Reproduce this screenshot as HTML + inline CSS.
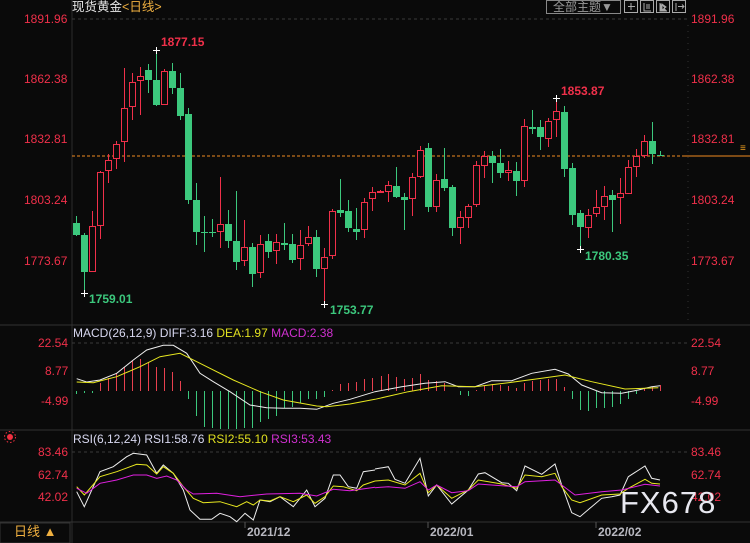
<!DOCTYPE html>
<html><head><meta charset="utf-8"><style>
html,body{margin:0;padding:0;background:#0a0a0a;}
body{width:750px;height:543px;overflow:hidden;position:relative;font-family:"Liberation Sans","Noto Sans CJK SC",sans-serif;}
svg{position:absolute;left:0;top:0;}
.t{position:absolute;white-space:nowrap;font-size:12px;line-height:14px;}
.r{color:#f0304a;}
</style></head><body>
<svg id="s" width="750" height="543" xmlns="http://www.w3.org/2000/svg">
<rect width="750" height="543" fill="#0a0a0a"/>
<line x1="72" y1="0" x2="72" y2="543" stroke="#2c2c2c"/>
<line x1="0" y1="325" x2="750" y2="325" stroke="#333"/>
<line x1="0" y1="430" x2="750" y2="430" stroke="#333"/>
<line x1="0" y1="522" x2="750" y2="522" stroke="#333"/>
<line x1="72" y1="19" x2="688" y2="19" stroke="#3a3a3a" stroke-dasharray="3,3"/>
<line x1="72" y1="343" x2="688" y2="343" stroke="#3a3a3a" stroke-dasharray="3,3"/>
<line x1="72" y1="452" x2="688" y2="452" stroke="#3a3a3a" stroke-dasharray="3,3"/>
<line x1="688" y1="25" x2="688" y2="325" stroke="#333" stroke-dasharray="1,5"/>
<line x1="72" y1="156" x2="683" y2="156" stroke="#f08a20" stroke-dasharray="3,2"/>
<line x1="683" y1="156" x2="750" y2="156" stroke="#f08a20"/>
<line x1="245" y1="522" x2="245" y2="528" stroke="#555"/>
<line x1="428" y1="522" x2="428" y2="528" stroke="#555"/>
<line x1="596" y1="522" x2="596" y2="528" stroke="#555"/>
<rect x="0" y="523" width="70" height="20" fill="#0a0a0a" stroke="#333"/>
<rect x="546.5" y="0.5" width="74" height="13" fill="none" stroke="#888"/>
<g fill="none" stroke="#aaa">
<rect x="624.5" y="0.5" width="13" height="12"/><rect x="640.5" y="0.5" width="13" height="12"/><rect x="656.5" y="0.5" width="13" height="12"/><rect x="672.5" y="0.5" width="13" height="12"/>
<path d="M631 3v7M628 6.5h7"/><path d="M644 3v8h7M647 4v5M649 4v5"/><path d="M660 3v8h7M662 4l4 3-4 3z" fill="#aaa"/><path d="M676 3v8M678 6.5h6M682 4.5l2 2-2 2"/>
</g>
<circle cx="10" cy="437" r="3" fill="#f03040"/><circle cx="10" cy="437" r="5.5" fill="none" stroke="#f03040" stroke-dasharray="1.5,2"/>
<g id="c"></g>
</svg>
<div class="t" style="left:72px;top:0px;font-size:12.5px;color:#e8e8e8">现货黄金<span style="color:#f0b040">&lt;日线&gt;</span></div>
<div class="t" style="left:553px;top:0px;color:#999">全部主题▼</div>
<div class="t r" style="left:24px;top:12px">1891.96</div>
<div class="t r" style="left:24px;top:72px">1862.38</div>
<div class="t r" style="left:24px;top:132px">1832.81</div>
<div class="t r" style="left:24px;top:193px">1803.24</div>
<div class="t r" style="left:24px;top:254px">1773.67</div>
<div class="t r" style="left:691px;top:12px">1891.96</div>
<div class="t r" style="left:691px;top:72px">1862.38</div>
<div class="t r" style="left:691px;top:132px">1832.81</div>
<div class="t r" style="left:691px;top:193px">1803.24</div>
<div class="t r" style="left:691px;top:254px">1773.67</div>
<div class="t" style="left:161px;top:35px;color:#f0304a;font-weight:bold">1877.15</div>
<div class="t" style="left:561px;top:84px;color:#f0304a;font-weight:bold">1853.87</div>
<div class="t" style="left:89px;top:292px;color:#3cc87d;font-weight:bold">1759.01</div>
<div class="t" style="left:330px;top:303px;color:#3cc87d;font-weight:bold">1753.77</div>
<div class="t" style="left:585px;top:249px;color:#3cc87d;font-weight:bold">1780.35</div>
<div class="t" style="left:740px;top:142px;color:#f0a020;font-size:10px">≡</div>
<div class="t" style="left:73px;top:326px;color:#d8d8f0">MACD(26,12,9) DIFF:3.16 <span style="color:#e0e020">DEA:1.97</span> <span style="color:#d030d0">MACD:2.38</span></div>
<div class="t r" style="left:38px;top:336px">22.54</div>
<div class="t r" style="left:45px;top:364px">8.77</div>
<div class="t r" style="left:41px;top:394px">-4.99</div>
<div class="t r" style="left:691px;top:336px">22.54</div>
<div class="t r" style="left:691px;top:364px">8.77</div>
<div class="t r" style="left:691px;top:394px">-4.99</div>
<div class="t" style="left:73px;top:432px;color:#d8d8f0">RSI(6,12,24) RSI1:58.76 <span style="color:#e0e020">RSI2:55.10</span> <span style="color:#d030d0">RSI3:53.43</span></div>
<div class="t r" style="left:38px;top:445px">83.46</div>
<div class="t r" style="left:38px;top:468px">62.74</div>
<div class="t r" style="left:38px;top:490px">42.02</div>
<div class="t r" style="left:691px;top:445px">83.46</div>
<div class="t r" style="left:691px;top:468px">62.74</div>
<div class="t r" style="left:691px;top:490px">42.02</div>
<div class="t" style="left:620px;top:486px;color:#e8e8f0;font-size:31px;line-height:34px;letter-spacing:1px">FX678</div>
<div class="t" style="left:14px;top:525px;color:#f0b040;font-size:13px">日线 ▲</div>
<div class="t" style="left:247px;top:525px;color:#b8b8c0;font-weight:bold">2021/12</div>
<div class="t" style="left:430px;top:525px;color:#b8b8c0;font-weight:bold">2022/01</div>
<div class="t" style="left:598px;top:525px;color:#b8b8c0;font-weight:bold">2022/02</div>
<script>
var R="#f0304a",G="#3cc87d",NS="http://www.w3.org/2000/svg",g=document.getElementById("c");
function el(n,a){var e=document.createElementNS(NS,n);for(var k in a)e.setAttribute(k,a[k]);g.appendChild(e);return e;}
var C=[["g",216,223,235,236],["g",233,235,272,293],["r",211,226,272,272],["r",171,172,226,239],["r",154,160,171,183],["r",141,144,159,169],["r",68,108,142,162],["r",73,82,107,120],["r",67,76,81,115],["g",64,70,80,93],["g",50,80,105,106],["r",69,71,105,105],["g",63,71,88,94],["g",73,88,116,120],["g",108,114,200,204],["g",183,200,232,245],["g",216,232,233,252],["g",219,232,233,237],["r",177,224,232,248],["g",210,224,241,248],["g",191,241,262,270],["r",220,247,261,266],["g",243,247,274,287],["r",235,244,273,278],["g",234,241,252,258],["r",234,242,251,264],["g",223,243,245,250],["g",234,244,260,263],["r",230,245,259,270],["r",226,237,244,246],["g",230,237,269,277],["r",248,257,269,304],["r",209,211,256,259],["g",179,210,213,217],["g",200,211,228,232],["g",208,229,232,240],["r",198,202,230,238],["r",187,192,199,211],["r",190,191,193,193],["r",181,185,192,202],["g",167,186,197,198],["g",193,197,200,230],["r",173,177,199,216],["r",146,150,177,178],["g",143,148,207,212],["r",174,180,207,212],["g",148,179,188,191],["g",185,187,228,236],["r",211,217,228,244],["r",204,206,218,228],["r",161,165,205,207],["r",151,156,166,178],["g",151,156,163,183],["g",149,163,173,178],["r",161,170,173,181],["g",162,171,181,196],["r",119,126,181,187],["g",110,127,129,134],["g",120,127,137,150],["r",118,121,139,147],["r",98,111,120,137],["g",106,112,169,177],["g",163,168,215,225],["g",210,213,227,249],["r",209,215,228,238],["r",190,207,214,217],["r",186,196,207,220],["g",190,195,200,232],["r",178,193,198,224],["r",160,167,194,194],["r",149,156,167,177],["r",135,141,156,158],["g",122,141,154,164],["g",151,155,156,156]];
C.forEach(function(c,i){var x=76+8*i,col=c[0]=="r"?R:G;
el("line",{x1:x+.5,y1:c[1],x2:x+.5,y2:c[4],stroke:col});
var h=Math.max(c[3]-c[2],1);
if(c[0]=="r")el("rect",{x:x-2.5,y:c[2]+.5,width:6,height:Math.max(h-1,1),fill:"#0a0a0a",stroke:col});
else el("rect",{x:x-3,y:c[2],width:7,height:h,fill:col});});
[[156,50],[580,249],[84,293],[324,304],[556,98]].forEach(function(p){el("path",{d:"M"+(p[0]-3)+" "+(p[1]+.5)+"h7M"+(p[0]+.5)+" "+(p[1]-3)+"v7",stroke:"#fff"});});
var H={76:394,84:393,92:393,100:383,108:378,116:373,124:367,132:361,140:359,148:362,156:367,164:368,172:372,180:381,188:399,196:416,204:427,212:428,220:429,228:429,236:429,244:428,252:428,260:422,268:419,276:416,284:408,292:407,300:403,308:399,316:399,324:397,332:390,340:384,348:383,356:382,364:379,372:378,381:376,388:374,396:377,404:379,412:378,420:374,428:380,436:381,444:383,452:391,460:395,468:396,476:390,484:386,492:384,500:385,508:386,516:388,524:383,532:381,540:380,548:379,556:379,564:387,572:399,580:410,588:411,596:408,604:408,612:407,620:404,628:399,636:394,644:388,652:387,660:385};
for(var k in H){var y=H[k],x=+k;el("line",{x1:x+.5,y1:391,x2:x+.5,y2:y,stroke:y<391?"#e8404f":"#3cc87d"});}
function pl(pts,col,ox,oy){var d=pts.map(function(p,i){return(i?"L":"M")+(ox+p[0]/3).toFixed(1)+" "+(oy+p[1]/3).toFixed(1);}).join("");el("path",{d:d,fill:"none",stroke:col,"stroke-width":1});}
pl([[230,176],[260,186],[300,180],[350,160],[400,120],[440,90],[490,76],[520,76],[560,100],[600,160],[640,185],[690,215],[750,255],[800,263],[850,265],[900,265],[950,268],[1000,250],[1050,238],[1125,215]],"#eee",0,320);
pl([[0,215],[80,200],[150,190],[210,185],[250,200],[300,200],[350,182],[410,182],[470,160],[540,148],[580,162],[620,195],[680,218],[740,220],[790,210],[830,200],[855,197]],"#eee",375,320);
pl([[230,186],[280,188],[350,170],[420,140],[480,110],[540,100],[600,130],[700,180],[780,215],[850,240],[950,258],[980,260],[1050,252],[1125,238]],"#e8e820",0,320);
pl([[0,238],[100,215],[200,197],[300,200],[400,188],[500,175],[570,165],[650,185],[750,207],[850,203]],"#e8e820",375,320);
pl([[230,515],[253,560],[300,455],[340,440],[380,410],[400,400],[440,405],[470,460],[490,435],[520,460],[550,510],[570,570],[600,598],[635,598],[660,580],[690,590],[710,605],[735,580],[760,600],[780,540],[810,545],[840,530],[880,560],[920,510],[945,560],[975,535],[1000,465],[1020,465],[1045,500],[1070,505],[1090,455],[1125,450]],"#eee",0,320);
pl([[0,447],[40,440],[60,478],[90,490],[135,415],[160,528],[185,495],[230,552],[280,510],[310,462],[330,458],[380,488],[400,490],[425,512],[450,438],[500,463],[540,432],[560,495],[590,578],[615,590],[650,560],[680,535],[710,530],[735,525],[760,470],[810,438],[830,475],[855,480]],"#eee",375,320);
pl([[230,500],[253,525],[300,470],[350,455],[410,433],[440,435],[470,462],[490,440],[520,460],[550,500],[580,535],[610,548],[660,545],[710,560],[740,545],[760,555],[780,540],[810,543],[840,530],[880,545],[920,525],[945,550],[975,530],[1000,498],[1030,500],[1070,512],[1090,495],[1125,483]],"#e8e820",0,320);
pl([[0,483],[40,480],[90,495],[135,460],[160,518],[185,495],[230,535],[280,510],[310,480],[380,492],[425,505],[450,465],[500,470],[540,460],[560,500],[590,540],[615,548],[680,525],[735,522],[760,505],[810,478],[830,490],[855,492]],"#e8e820",375,320);
pl([[230,505],[260,520],[300,490],[350,480],[400,465],[440,465],[470,475],[500,468],[530,480],[560,510],[580,522],[650,520],[720,530],[800,522],[900,520],[950,528],[1000,508],[1050,512],[1125,502]],"#e020e0",0,320);
pl([[0,503],[40,500],[90,505],[135,485],[160,510],[185,495],[230,518],[280,512],[310,492],[380,497],[425,500],[450,485],[540,480],[560,495],[600,525],[680,515],[740,510],[810,493],[855,498]],"#e020e0",375,320);
</script>
</body></html>
